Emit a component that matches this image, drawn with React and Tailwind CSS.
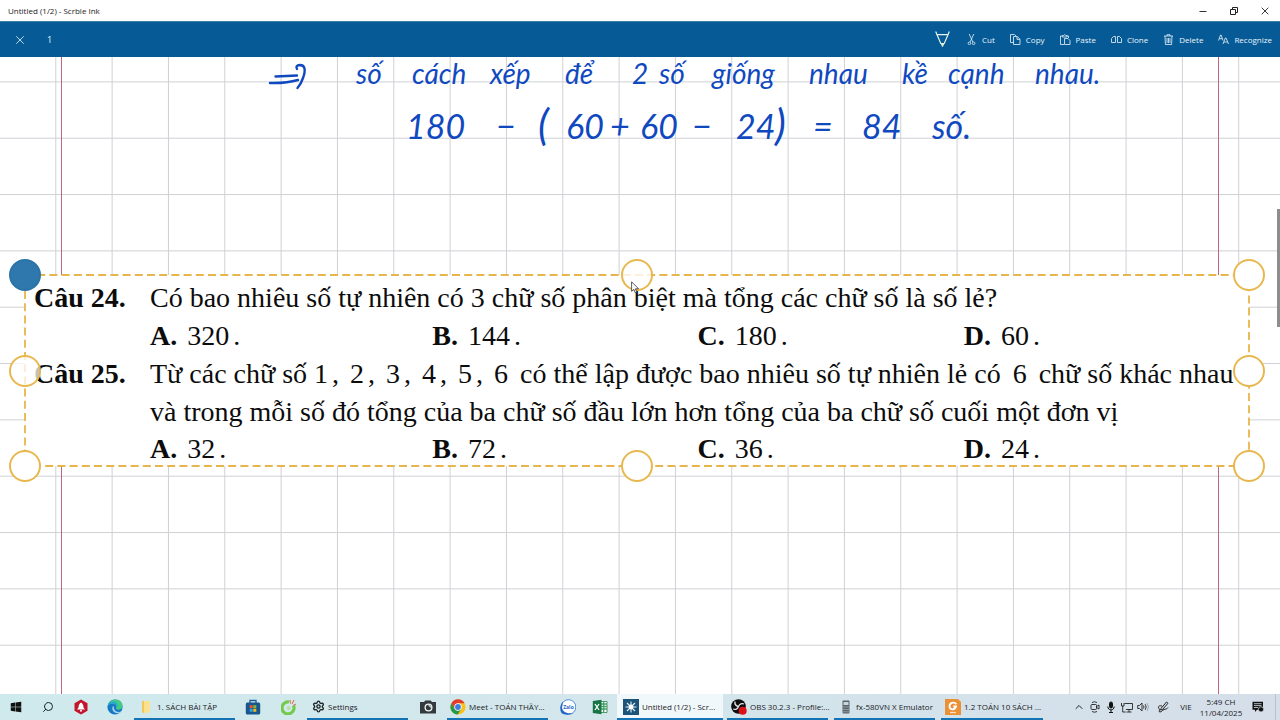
import React from "react";
import { FaWindows } from "react-icons/fa";
import { Search, Settings, ChevronUp } from "lucide-react";

const cx = (...c) => c.filter(Boolean).join(" ");

/* ---------- window chrome ---------- */

function TitleBar() {
  return (
    <header className="flex h-[21px] shrink-0 items-center bg-white pl-2 text-[8px] leading-3 text-[#222]">
      <h1 className="mr-auto">Untitled (1/2) - Scrble Ink</h1>
      <button aria-label="Minimize" className="flex h-full w-[30px] items-center justify-center">
        <svg width="8" height="8" viewBox="0 0 8 8" stroke="#333" strokeWidth="1"><path d="M.5 4.5h7" /></svg>
      </button>
      <button aria-label="Restore" className="flex h-full w-[31px] items-center justify-center">
        <svg width="8" height="8" viewBox="0 0 8 8" fill="none" stroke="#222" strokeWidth="1"><path d="M.5 2.5h5v5h-5zM2.500 2.500v-2h5v5h-2" /></svg>
      </button>
      <button aria-label="Close" className="flex h-full w-[31px] items-center justify-center">
        <svg width="8" height="8" viewBox="0 0 8 8" stroke="#222" strokeWidth=".9"><path d="M.7.7l6.600 6.600M7.300.7L.7 7.300" /></svg>
      </button>
    </header>
  );
}

const toolIcons = {
  cut: <g><path d="M3.200 0l3.700 8M7.800 0L4.100 8" /><circle cx="3.400" cy="9.300" r="1.300" /><circle cx="7.600" cy="9.300" r="1.300" /></g>,
  copy: <g><path d="M3.500 8.500h-3v-8h4l1.500 1.500" /><path d="M3.500 2.500h3.700L10 5.200v5.300H3.500zM7 2.700v2.700h3" /></g>,
  paste: <g><path d="M4 10.500H.5V2h2M7 2h1.500v2M2.500 3V1.500h1.200a1.100 1.100 0 0 1 2.100 0H7V3z" /><path d="M4.500 4.500H8l2 2v4H4.500z" /></g>,
  clone: <g><path d="M4.500 8.500h-4v-4l2-2h2zM6.500 8.500v-6h2l2 2v4z" /></g>,
  del: <g><path d="M1 2h9M4 2V.7h3V2M2 2l.4 8.500h6.200L9 2M4 4v5M5.500 4v5M7 4v5" /></g>,
  recog: <g><path d="M.5 6.500L2.500 1h.6L5 6.500M1.200 4.700h3" /><path d="M5 10l2.300-6h.7l2.500 6M5.900 8h3.700" /></g>,
};

function Tool({ icon, children }) {
  return (
    <button className="flex items-center gap-[5px]">
      <svg width="11" height="11" viewBox="0 0 11 11" fill="none" stroke="#dcecf7" strokeWidth=".85">{toolIcons[icon]}</svg>
      {children}
    </button>
  );
}

function ToolBar() {
  return (
    <nav className="flex h-9 shrink-0 items-center border-t border-[#3c7fab] bg-[#065b96] pr-2 text-[8px] leading-3 text-[#eaf4fb]">
      <button aria-label="Close page" className="flex h-full w-10 items-center justify-center">
        <svg width="8" height="8" viewBox="0 0 8 8" stroke="#d5e8f4" strokeWidth=".9"><path d="M.3.3l7.400 7.400M7.700.3L.3 7.700" /></svg>
      </button>
      <span className="ml-[7px] mr-auto text-[9px]">1</span>
      <button aria-label="Pen" className="mr-4">
        <svg width="15" height="17" viewBox="0 0 15 17" fill="none" stroke="#e8f3ee" strokeWidth="1.200">
          <path d="M.7.5l1.300 3.200h11L14.300.5M2 3.700l3.800 8.800h3.400L13 3.700" />
          <path d="M6 12.500l1.500 3.200L9 12.500z" fill="#e5e98c" strokeWidth=".8" />
        </svg>
      </button>
      <div className="flex items-center gap-[15px]">
        <Tool icon="cut">Cut</Tool>
        <Tool icon="copy">Copy</Tool>
        <Tool icon="paste">Paste</Tool>
        <Tool icon="clone">Clone</Tool>
        <Tool icon="del">Delete</Tool>
        <Tool icon="recog">Recognize</Tool>
      </div>
    </nav>
  );
}

/* ---------- canvas ---------- */

function Paper() {
  return (
    <>
      <svg className="absolute inset-0 h-full w-full" aria-hidden="true">
        <defs>
          <pattern id="grid" x="55.300" y="24.400" width="56.330" height="56.330" patternUnits="userSpaceOnUse">
            <path d="M.5 0v56.330M0 .5h56.330" stroke="#cfd0d4" strokeWidth="1" />
          </pattern>
        </defs>
        <rect width="100%" height="100%" fill="url(#grid)" />
      </svg>
      <div className="absolute inset-y-0 left-[61px] w-px bg-[#bd6683]" />
      <div className="absolute inset-y-0 right-[61px] w-px bg-[#bd6683]" />
    </>
  );
}

const inkWords = [
  ["left-[356px]", "số"],
  ["left-[412px]", "cách"],
  ["left-[490px]", "xếp"],
  ["left-[565px]", "để"],
  ["left-[632px]", "2"],
  ["left-[659px]", "số"],
  ["left-[712px]", "giống"],
  ["left-[809px]", "nhau"],
  ["left-[902px]", "kề"],
  ["left-[948px]", "cạnh"],
  ["left-[1035px]", "nhau."],
];

const inkSums = [
  ["left-[406px]", "180"],
  ["left-[496px]", "−"],
  ["left-[566px]", "60"],
  ["left-[610px]", "+"],
  ["left-[640px]", "60"],
  ["left-[692px]", "−"],
  ["left-[736px]", "24"],
  ["left-[813px]", "="],
  ["left-[862px]", "84"],
  ["left-[932px]", "số."],
];

const inkParens = [
  ["left-[538px]", "("],
  ["left-[775px]", ")"],
];

function Ink() {
  return (
    <section className="relative h-[218px] font-[Lato,sans-serif] italic text-[#1049bf]">
      <svg className="absolute left-[268px] top-[6px]" width="40" height="28" viewBox="0 0 40 28" fill="none" stroke="#1049bf" strokeWidth="2.400" strokeLinecap="round" strokeLinejoin="round">
        <path d="M7.500 13.500L29 12.500M2 20q16 .500 28-3M29 6q-2-3.500 3-4c5 0 6 5 3 13q-2 6-5.500 10" />
      </svg>
      {inkWords.map(([pos, w]) => (
        <span key={pos} className={cx("absolute top-0 text-[28px] leading-8", pos)}>{w}</span>
      ))}
      {inkSums.map(([pos, w]) => (
        <span key={pos} className={cx("absolute top-[47px] text-[34px] leading-[44px]", pos)}>{w}</span>
      ))}
      {inkParens.map(([pos, w]) => (
        <span key={pos} className={cx("absolute top-[45px] text-[42px] leading-[44px]", pos)}>{w}</span>
      ))}
    </section>
  );
}

const handles = [
  ["-left-4 -top-4", "border-[#2b74a8] bg-[#2f78ad]"],
  ["left-1/2 -ml-4 -top-4", "border-[#e8b84e] bg-white/80"],
  ["-right-4 -top-4", "border-[#e8b84e] bg-white"],
  ["-left-4 top-1/2 -mt-4", "border-[#e8b84e] bg-white/75"],
  ["-right-4 top-1/2 -mt-4", "border-[#e8b84e] bg-white"],
  ["-left-4 -bottom-4", "border-[#e8b84e] bg-white"],
  ["left-1/2 -ml-4 -bottom-4", "border-[#e8b84e] bg-white"],
  ["-right-4 -bottom-4", "border-[#e8b84e] bg-white"],
];

function Num({ children }) {
  return <span className="inline-block w-9">{children}<span className="ml-1">,</span></span>;
}

function Answers({ items, className }) {
  return (
    <ol className={cx("col-start-2 grid grid-cols-[282fr_265fr_266fr_285fr]", className)}>
      {items.map(([k, v]) => (
        <li key={k}><b>{k}.</b><span className="ml-[10px]">{v}</span><span className="ml-1">.</span></li>
      ))}
    </ol>
  );
}

function Selection() {
  return (
    <section className="relative ml-[25px] mr-[31px] bg-white">
      <svg className="absolute inset-0 h-full w-full overflow-visible" aria-hidden="true">
        <rect width="100%" height="100%" fill="none" stroke="#e8b54c" strokeWidth="1.800" strokeDasharray="8 4.200" />
      </svg>
      <div className="relative grid grid-cols-[116px_1fr] whitespace-nowrap pl-[9px] pt-1 font-['Liberation_Serif','Times_New_Roman',serif] text-[28px] leading-[38px] text-[#0c0c0c]">
        <b>Câu 24.</b>
        <p>Có bao nhiêu số tự nhiên có 3 chữ số phân biệt mà tổng các chữ số là số lẻ?</p>
        <Answers items={[["A", "320"], ["B", "144"], ["C", "180"], ["D", "60"]]} />
        <b>Câu 25.</b>
        <p>
          Từ các chữ số <Num>1</Num><Num>2</Num><Num>3</Num><Num>4</Num><Num>5</Num>6<span className="ml-[5px]"> có thể lập được bao nhiêu số tự nhiên lẻ có</span><span className="mx-3">6</span>chữ số khác nhau
          <br />
          và trong mỗi số đó tổng của ba chữ số đầu lớn hơn tổng của ba chữ số cuối một đơn vị
        </p>
        <Answers className="leading-[35px]" items={[["A", "32"], ["B", "72"], ["C", "36"], ["D", "24"]]} />
      </div>
      {handles.map(([pos, look]) => (
        <span key={pos} className={cx("absolute h-8 w-8 rounded-full border-2", pos, look)} />
      ))}
      <svg className="absolute left-[606px] top-[6px]" width="9" height="13" viewBox="0 0 9 13" aria-hidden="true">
        <path d="M.6.8v9.500l2.200-2 1.500 3.500 1.500-.7L4.400 7.800h3.200z" fill="#fff" stroke="#333" strokeWidth=".8" />
      </svg>
    </section>
  );
}

/* ---------- taskbar ---------- */

const S = ({ children, w = 16 }) => <svg width={w} height="16" viewBox={`0 0 ${w} 16`} className="shrink-0">{children}</svg>;

const app = {
  red: <S><path d="M8 .5l6.500 3.700v7.600L8 15.500l-6.500-3.700V4.200z" fill="#c3142c" /><path d="M8 3.500c-2 1-2.500 3-2.500 5L4 10.500h8L10.500 8.500c0-2-.5-4-2.500-5z" fill="#fff" /><circle cx="8" cy="11.800" r="1" fill="#fff" /></S>,
  edge: <S><circle cx="8" cy="8" r="7.600" fill="#1679c5" /><path d="M.6 7C1.500 2.500 5 .4 8.500.4c4.500 0 7.200 3 7.100 6.300 0 2.500-2 4-4.200 4-1.800 0-2.800-.7-2.300-1.600C10 7 8.500 4.500 5.500 4.500 3 4.500 1.300 5.600.6 7z" fill="#45c985" /><path d="M.6 7C1.500 3.500 4 2 7 2.500c3 .6 4.500 3 3.500 5.500C9.500 6 8 4.800 5.500 4.700 3 4.600 1.300 5.600.6 7z" fill="#28a9d0" /><path d="M6.300 6.500C4 9.500 6 14 10.500 14.200c1.800 0 3-.6 3.800-1.700-2 1-6.500.7-7.200-2.700z" fill="#dff1f5" opacity=".75" /></S>,
  folder: <S><path d="M4 2h5v12H5l-1-1z" fill="#f2c65a" /><path d="M6 2h6v10.500l-4 1.500H6z" fill="#fbe08e" /></S>,
  store: <S><path d="M5 4V1.500h6V4" fill="none" stroke="#1a5d96" strokeWidth="1.300" /><rect x=".8" y="3.500" width="14.400" height="12" rx="1.500" fill="#17568e" /><path d="M4.700 6.200h3v3h-3z" fill="#ef5230" /><path d="M8.300 6.200h3v3h-3z" fill="#7ebc2c" /><path d="M4.700 9.800h3v3h-3z" fill="#2ba3e0" /><path d="M8.300 9.800h3v3h-3z" fill="#f9b817" /></S>,
  coc: <S><path d="M12.500 6.500A6 6 0 1 1 8 3" fill="none" stroke="#72cb4a" strokeWidth="3.200" /><circle cx="7.700" cy="9" r="2" fill="#b7e39d" /><path d="M9.500 4.500L9 1M11 5l2-4M12 6.500l3-1.500" stroke="#e0663a" strokeWidth="1" /></S>,
  camera: <S><path d="M0 3h4l1.300-1.500h5.400L12 3h4v11.500H0z" fill="#33393d" /><circle cx="8.500" cy="8.500" r="4" fill="#eef5f5" /><circle cx="8.500" cy="8.500" r="2.700" fill="#33393d" /><path d="M8.500 6.500a2 2 0 0 1 2 2" stroke="#fff" fill="none" /></S>,
  chrome: <S><circle cx="8" cy="8" r="7.600" fill="#fbc116" /><path d="M1.400 4.200A7.600 7.600 0 0 1 14.600 4.200H8L4.700 10z" fill="#e33b2e" /><path d="M1.400 4.200A7.600 7.600 0 0 0 7.700 15.600L11.300 9.900 8 11.500 4.700 9.900z" fill="#279847" /><circle cx="8" cy="8" r="3.700" fill="#fff" /><circle cx="8" cy="8" r="2.900" fill="#3b7de8" /></S>,
  zalo: <S><circle cx="8.500" cy="8" r="7.300" fill="#fff" stroke="#2d75d5" strokeWidth=".8" /><path d="M3 2.500C-.5 7-.5 11 2 14.500c3 1.800 8 1.300 11-.5-5 1-10-.5-11-5z" fill="#2467c5" /><text x="3.200" y="9.500" fontSize="5" fontWeight="700" fill="#2467c5">Zalo</text></S>,
  excel: <S><path d="M8 2.500h7v11H8z" fill="#fff" stroke="#2c8050" strokeWidth=".8" /><path d="M8 5h7M8 7.500h7M8 10h7M11.700 3v10" stroke="#43a066" strokeWidth="1.300" /><path d="M.8 2L9.500.7v14.600L.8 14z" fill="#177445" /><path d="M3 5l4 6M7 5l-4 6" stroke="#fff" strokeWidth="1.300" /></S>,
  ink: <S><rect width="16" height="16" fill="#1c5378" /><path d="M8 2.500v11M2.500 8h11M4 4l8 8M12 4l-8 8" stroke="#e4f1f6" strokeWidth="1.100" /><circle cx="8" cy="8" r="2.400" fill="#fff" /></S>,
  obs: <S><circle cx="7.500" cy="7.500" r="7.300" fill="#0d0d0f" /><path d="M4 2.500c-.5 3 1 4.500 3.500 5M13 5c-2-1-4.500-.3-5.500 2.500M7.500 7.500c-.8 2.500-3 3.500-5.300 2.500" fill="none" stroke="#e3e5e7" strokeWidth="1.300" /><circle cx="11.700" cy="11.700" r="4" fill="#df1118" /></S>,
  calc: <S w={8}><rect x=".5" y="1.500" width="7" height="13" rx="1" fill="#59636b" /><path d="M1.500 3h5v3h-5z" fill="#c8d7d7" /><path d="M1.500 8h5M1.500 10.500h5M1.500 12.800h5" stroke="#cfd6db" strokeDasharray="1 1" /></S>,
  pdf: <S><path d="M0 0h13l3 3v13H0z" fill="#ea9137" /><path d="M11.500 5C9 2.500 4.500 3.500 4.500 7.200c0 3.800 5.500 4.300 6.500.3H8.300" fill="none" stroke="#fff" strokeWidth="1.800" /><path d="M5 13.500h6" stroke="#fbe1c2" strokeWidth="1.200" /></S>,
};

function Pin({ label, width = "w-8", children }) {
  return <button aria-label={label} className={cx("flex h-full shrink-0 items-center justify-center", width)}>{children}</button>;
}

function Task({ icon, active, className = "w-[101px]", children }) {
  return (
    <button className={cx("flex h-full shrink-0 items-center gap-[3px] whitespace-nowrap border-b-2 border-[#1473b5] pt-px text-left", active ? "bg-[#f0f8fb]" : "", className)}>
      {icon}
      <span>{children}</span>
    </button>
  );
}

function Taskbar() {
  return (
    <footer className="flex h-[26px] shrink-0 items-center bg-linear-to-r from-[#cfeaed] via-[#d3e6ec] to-[#d5dee9] text-[8px] leading-3 text-[#1c2226]">
      <Pin label="Start"><FaWindows size={12} color="#111" /></Pin>
      <Pin label="Search"><Search size={12} strokeWidth={2} className="-scale-x-100" /></Pin>
      <Pin label="Garena" width="w-[34px]">{app.red}</Pin>
      <Pin label="Edge" width="w-[34px]">{app.edge}</Pin>
      <Task icon={app.folder} className="ml-0.5 w-[101px] pl-1">1. SÁCH BÀI TẬP</Task>
      <Pin label="Store" width="w-9">{app.store}</Pin>
      <Pin label="Browser" width="w-9">{app.coc}</Pin>
      <Task icon={<Settings size={13} strokeWidth={2.5} />} className="w-[101px] gap-1 pl-[5px]">Settings</Task>
      <Pin label="Camera" width="w-[39px]">{app.camera}</Pin>
      <Task icon={app.chrome} className="w-[101px] pl-[3px]">Meet - TOÁN THẦY...</Task>
      <div className="flex h-full pl-1 pr-px">
        <Pin label="Zalo">{app.zalo}</Pin>
        <Pin label="Excel">{app.excel}</Pin>
      </div>
      <Task icon={app.ink} active className="w-[106px] pl-[6px]">Untitled (1/2) - Scr...</Task>
      <Task icon={app.obs} className="ml-1 w-[101px] pl-1">OBS 30.2.3 - Profile:...</Task>
      <Task icon={app.calc} className="ml-[6px] w-[101px] gap-[6px] pl-2">fx-580VN X Emulator</Task>
      <Task icon={app.pdf} className="ml-[6px] w-[102px] pl-1">1.2 TOÁN 10 SÁCH ...</Task>
      <div className="ml-auto flex h-full items-center">
        <Pin label="Show hidden icons" width="w-4"><ChevronUp size={12} /></Pin>
        <Pin label="Meet now" width="w-4">
          <svg width="10" height="12" viewBox="0 0 10 12" fill="none" stroke="#222" strokeWidth=".9"><rect x="1" y="3.500" width="5.500" height="5" rx="1" /><path d="M6.500 5.500L9 4v4L6.500 6.500M2 1.500q2.500-1.500 5 0M2 10.500q2.500 1.500 5 0" /></svg>
        </Pin>
        <Pin label="Microphone" width="w-4">
          <svg width="8" height="12" viewBox="0 0 8 12" fill="none" stroke="#111"><rect x="2.500" y="1" width="3" height="6" rx="1.500" fill="#111" /><path d="M.8 5.500c0 4.500 6.400 4.500 6.400 0M4 9v2.500M2 11.500h4" /></svg>
        </Pin>
        <Pin label="Network" width="w-4">
          <svg width="12" height="11" viewBox="0 0 12 11" fill="none" stroke="#222" strokeWidth=".9"><path d="M3.500 1.500h8v6H5M8 7.500v2.500M5.500 10h5M.5 1v3h2.500V1M1.700 4v6h3" /></svg>
        </Pin>
        <Pin label="Volume" width="w-4">
          <svg width="12" height="10" viewBox="0 0 12 10" fill="none" stroke="#222" strokeWidth=".9"><path d="M.7 3.500h1.800L5 1v8L2.500 6.500H.7zM6.500 3.500q1 1.500 0 3M8.200 2.200q2 2.800 0 5.600" /><path d="M10 1q3 4 0 8" stroke="#9aa5ad" /></svg>
        </Pin>
        <Pin label="Pen" width="w-6">
          <svg width="12" height="12" viewBox="0 0 12 12" fill="none" stroke="#222" strokeWidth="1"><path d="M4 7.500L9.500 1l1.500 1.300L5.500 8.500l-2 .5zM5 5C2 4 .5 6 2 7.500S1 11 3 11s2-2 4-2.500 3-.5 4-2" /></svg>
        </Pin>
        <span className="w-[22px] text-center">VIE</span>
        <time className="w-[48px] whitespace-nowrap text-center leading-[11px]">5:49 CH<br />11/04/2025</time>
        <Pin label="Notifications" width="w-[26px]">
          <svg width="12" height="12" viewBox="0 0 12 12"><path d="M.5.7h10.500v8H5L3 11V8.700H.5z" fill="#111" /><path d="M2 2.700h7.500M2 4.600h7.500M2 6.500h4" stroke="#dbe4ec" strokeWidth=".8" /><circle cx="9" cy="8.300" r="2.600" fill="#111" stroke="#d5dee9" strokeWidth=".7" /></svg>
        </Pin>
        <span className="ml-1 h-full w-px bg-[#b9c3cd]" />
        <span className="w-1" />
      </div>
    </footer>
  );
}

export default function App() {
  return (
    <div className="flex h-screen flex-col overflow-hidden bg-white font-['Open_Sans','Noto_Sans',sans-serif]">
      <TitleBar />
      <ToolBar />
      <main className="relative flex-1 overflow-hidden bg-white">
        <Paper />
        <Ink />
        <Selection />
        <div className="absolute right-0 top-[152px] h-[118px] w-[3px] bg-[#8d8d8d]" />
      </main>
      <Taskbar />
    </div>
  );
}
